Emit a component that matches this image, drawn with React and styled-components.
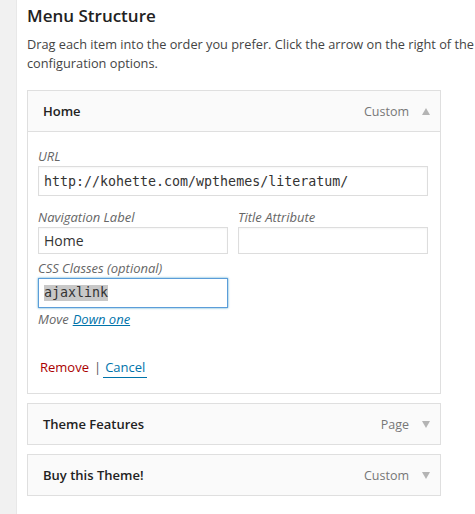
import React from 'react';
import styled, { createGlobalStyle } from 'styled-components';

const Global = createGlobalStyle`
    html, body {
        margin: 0;
        padding: 0;
        background: #fff;
        font-family: "Open Sans", "Liberation Sans", sans-serif;
        color: #222;
    }
`;

const Page = styled.div`
    display: flex;
    width: 475px;
    height: 514px;
    overflow: hidden;
`;

const Sidebar = styled.div`
    width: 16px;
    flex-shrink: 0;
    background: #f1f1f1;
    border-right: 1px solid #e8e8e8;
`;

const Content = styled.div`
    flex: 1;
    padding: 4px 0 0 10px;
    min-width: 0;
`;

const Title = styled.h3`
    margin: 0;
    font-size: 17px;
    font-weight: 600;
    line-height: 23px;
    color: #222;
`;

const Description = styled.p`
    margin: 8px 0 17px;
    font-size: 12.75px;
    line-height: 19px;
    color: #444;
    white-space: nowrap;
`;

const Item = styled.div`
    width: 412px;
    border: 1px solid #dfdfdf;
    background: #fff;
    margin-bottom: 9px;
`;

const Handle = styled.div`
    display: flex;
    align-items: center;
    height: 40px;
    padding: 0 10px 0 15px;
    background: #fafafa;
    border-bottom: ${p => (p.open ? '1px solid #dfdfdf' : 'none')};
`;

const ItemTitle = styled.span`
    flex: 1;
    font-size: 13px;
    font-weight: 600;
    color: #222;
`;

const ItemType = styled.span`
    font-size: 12.5px;
    color: #777;
    margin-right: 13px;
`;

const Arrow = styled.span`
    width: 0;
    height: 0;
    border-left: 4.5px solid transparent;
    border-right: 4.5px solid transparent;
    ${p => (p.up ? 'border-bottom: 7px solid #b4b4b4;' : 'border-top: 7px solid #b4b4b4;')}
`;

const Settings = styled.div`
    padding: 15px 12px 16px 10px;
`;

const Row = styled.div`
    display: grid;
    grid-template-columns: 190px 190px;
    column-gap: 10px;
    margin-top: ${p => p.top || 0}px;
`;

const Label = styled.div`
    font-size: 13px;
    font-style: italic;
    line-height: 19px;
    color: #666;
`;

const Field = styled.div`
    box-sizing: border-box;
    height: ${p => p.h || 27}px;
    width: ${p => (p.wide ? '390px' : '100%')};
    border: 1px solid ${p => (p.focus ? '#5b9dd9' : '#dddddd')};
    box-shadow: ${p => (p.focus ? '0 0 2px rgba(30,140,190,0.8)' : 'inset 0 1px 2px rgba(0,0,0,0.04)')};
    padding: 0 5px;
    display: flex;
    align-items: center;
    font-family: ${p => (p.mono ? '"DejaVu Sans Mono", monospace' : '"Open Sans", sans-serif')};
    font-size: ${p => (p.mono ? '13.3px' : '14px')};
    color: #333;
    white-space: nowrap;
    overflow: hidden;
`;

const Selected = styled.span`
    background: #c8c8c8;
    line-height: 16px;
`;

const Move = styled.div`
    font-size: 13px;
    font-style: italic;
    color: #666;
    line-height: 19px;
    margin-top: 2px;
`;

const Link = styled.a`
    color: #0073aa;
    text-decoration: underline;
    margin-left: 4px;
`;

const Actions = styled.div`
    margin-top: 29px;
    padding-left: 2px;
    font-size: 13px;
    line-height: 19px;
    color: #555;
`;

const Remove = styled.a`
    color: #a00;
    text-decoration: none;
`;

const Cancel = styled.a`
    color: #0073aa;
    text-decoration: none;
    border-bottom: 1px solid #0073aa;
    padding: 0 2px 1px;
`;

const Sep = styled.span`
    margin: 0 2px 0 5px;
`;

const MenuItem = ({ title, type, open, children }) => (
    <Item>
        <Handle open={open}>
            <ItemTitle>{title}</ItemTitle>
            <ItemType>{type}</ItemType>
            <Arrow up={open} />
        </Handle>
        {open && children}
    </Item>
);

export default function App() {
    return (
        <Page>
            <Global />
            <Sidebar />
            <Content>
                <Title>Menu Structure</Title>
                <Description>
                    Drag each item into the order you prefer. Click the arrow on the right of the
                    <br />
                    configuration options.
                </Description>

                <MenuItem title="Home" type="Custom" open>
                    <Settings>
                        <Label>URL</Label>
                        <Field wide mono h={30}>http://kohette.com/wpthemes/literatum/</Field>
                        <Row top={12}>
                            <div>
                                <Label>Navigation Label</Label>
                                <Field>Home</Field>
                            </div>
                            <div>
                                <Label>Title Attribute</Label>
                                <Field />
                            </div>
                        </Row>
                        <Row top={5}>
                            <div>
                                <Label>CSS Classes (optional)</Label>
                                <Field mono focus h={30}><Selected>ajaxlink</Selected></Field>
                            </div>
                        </Row>
                        <Move>
                            Move<Link href="#">Down one</Link>
                        </Move>
                        <Actions>
                            <Remove href="#">Remove</Remove>
                            <Sep>|</Sep>
                            <Cancel href="#">Cancel</Cancel>
                        </Actions>
                    </Settings>
                </MenuItem>

                <MenuItem title="Theme Features" type="Page" />
                <MenuItem title="Buy this Theme!" type="Custom" />
            </Content>
        </Page>
    );
}
